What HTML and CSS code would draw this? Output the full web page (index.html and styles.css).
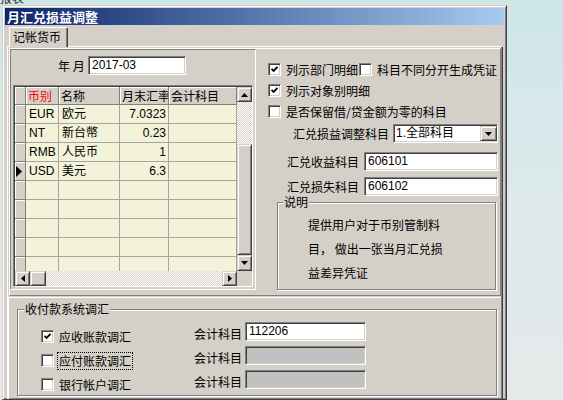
FILE: index.html
```html
<!DOCTYPE html>
<html lang="zh-CN">
<head>
<meta charset="utf-8">
<title>月汇兑损益调整</title>
<link rel="stylesheet" href="styles.css">
</head>
<body>
<div class="desk-strip"><span>报表</span></div>
<div class="window">
  <div class="titlebar">月汇兑损益调整</div>
  <div class="tabs"><div class="tab">记帐货币</div></div>
  <div class="panel">
    <div class="upper">
      <div class="left">
        <div class="yearrow">
          <span class="yearlabel">年 月</span>
          <div class="field year">2017-03</div>
        </div>
        <div class="grid">
          <div class="gridmain">
            <div class="table">
              <div class="h ind"></div><div class="h red">币别</div><div class="h">名称</div><div class="h">月末汇率</div><div class="h">会计科目</div>
              <div class="ind"></div><div class="c">EUR</div><div class="c">欧元</div><div class="c num">7.0323</div><div class="c"></div>
              <div class="ind"></div><div class="c">NT</div><div class="c">新台幣</div><div class="c num">0.23</div><div class="c"></div>
              <div class="ind"></div><div class="c">RMB</div><div class="c">人民币</div><div class="c num">1</div><div class="c"></div>
              <div class="ind cur"><svg width="6" height="11" viewBox="0 0 6 11"><polygon points="0,0 6,5.5 0,11" fill="#000"/></svg></div><div class="c">USD</div><div class="c">美元</div><div class="c num">6.3</div><div class="c"></div>
              <div class="ind"></div><div class="c"></div><div class="c"></div><div class="c"></div><div class="c"></div>
              <div class="ind"></div><div class="c"></div><div class="c"></div><div class="c"></div><div class="c"></div>
              <div class="ind"></div><div class="c"></div><div class="c"></div><div class="c"></div><div class="c"></div>
              <div class="ind"></div><div class="c"></div><div class="c"></div><div class="c"></div><div class="c"></div>
              <div class="ind"></div><div class="c"></div><div class="c"></div><div class="c"></div><div class="c"></div>
            </div>
            <div class="hs">
              <div class="sbtn hbtn"><svg width="4" height="7" viewBox="0 0 4 7"><polygon points="4,0 0,3.5 4,7" fill="#000"/></svg></div>
              <div class="sthumb hthumb"></div>
              <div class="trough"></div>
              <div class="sbtn hbtn"><svg width="4" height="7" viewBox="0 0 4 7"><polygon points="0,0 4,3.5 0,7" fill="#000"/></svg></div>
            </div>
          </div>
          <div class="vs">
            <div class="sbtn vbtn"><svg width="7" height="4" viewBox="0 0 7 4"><polygon points="0,4 7,4 3.5,0" fill="#000"/></svg></div>
            <div class="trough vtrough"></div>
            <div class="sthumb vthumb"></div>
            <div class="sbtn vbtn vdown"><svg width="7" height="4" viewBox="0 0 7 4"><polygon points="0,0 7,0 3.5,4" fill="#000"/></svg></div>
            <div class="corner"></div>
          </div>
        </div>
      </div>
      <div class="right">
        <div class="cbrow">
          <span class="cb"><svg width="7" height="7" viewBox="0 0 7 7"><path d="M0.5 2.8 L2.6 4.9 L6.5 1" stroke="#000" stroke-width="1.8" fill="none"/></svg></span>
          <span class="cbtext">列示部门明细</span>
          <span class="cb cb2"></span>
          <span class="cbtext">科目不同分开生成凭证</span>
        </div>
        <div class="cbrow">
          <span class="cb"><svg width="7" height="7" viewBox="0 0 7 7"><path d="M0.5 2.8 L2.6 4.9 L6.5 1" stroke="#000" stroke-width="1.8" fill="none"/></svg></span>
          <span class="cbtext">列示对象别明细</span>
        </div>
        <div class="cbrow">
          <span class="cb"></span>
          <span class="cbtext">是否保留借/贷金额为零的科目</span>
        </div>
        <div class="frow frow1">
          <span class="flabel">汇兑损益调整科目</span>
          <div class="field combo"><span>1.全部科目</span><span class="cbtn"><svg width="7" height="4" viewBox="0 0 7 4"><polygon points="0,0 7,0 3.5,4" fill="#000"/></svg></span></div>
        </div>
        <div class="frow frow2">
          <span class="flabel">汇兑收益科目</span>
          <div class="field acct">606101</div>
        </div>
        <div class="frow frow3">
          <span class="flabel">汇兑损失科目</span>
          <div class="field acct">606102</div>
        </div>
        <fieldset class="note">
          <legend>说明</legend>
          <p>提供用户对于币别管制料<br>目， 做出一张当月汇兑损<br>益差异凭证</p>
        </fieldset>
      </div>
    </div>
    <div class="lower">
      <fieldset class="group">
        <legend>收付款系统调汇</legend>
        <div class="grows">
          <div class="grow">
            <div class="gcb">
              <span class="cb"><svg width="7" height="7" viewBox="0 0 7 7"><path d="M0.5 2.8 L2.6 4.9 L6.5 1" stroke="#000" stroke-width="1.8" fill="none"/></svg></span>
              <span class="cbtext">应收账款调汇</span>
            </div>
            <span class="glabel">会计科目</span>
            <div class="field gfield">112206</div>
          </div>
          <div class="grow">
            <div class="gcb">
              <span class="cb"></span>
              <span class="cbtext focus">应付账款调汇</span>
            </div>
            <span class="glabel">会计科目</span>
            <div class="field gfield dis"></div>
          </div>
          <div class="grow">
            <div class="gcb">
              <span class="cb"></span>
              <span class="cbtext">银行帐户调汇</span>
            </div>
            <span class="glabel">会计科目</span>
            <div class="field gfield dis"></div>
          </div>
        </div>
      </fieldset>
    </div>
  </div>
</div>
</body>
</html>
```
FILE: styles.css
```css
* { box-sizing: border-box; }
html, body { margin: 0; padding: 0; }
body {
  width: 563px;
  height: 400px;
  overflow: hidden;
  background: linear-gradient(180deg, #cde6e8 0%, #dce9eb 45%, #e6e9ea 100%);
  font-family: "Noto Sans CJK SC", "Liberation Sans", sans-serif;
  font-size: 12px;
  color: #000;
}
.desk-strip { height: 5px; overflow: hidden; font-size: 12px; line-height: 12px; }
.desk-strip span { display: block; margin-top: -8px; color: #333; }

.window {
  margin-left: 2px;
  width: 505px;
  height: 395px;
  background: #d4d0c8;
  border: 1px solid;
  border-color: #d4d0c8 #404040 #404040 #d4d0c8;
  box-shadow: inset 1px 1px 0 #fff, inset -1px -1px 0 #808080;
  padding: 2px;
  overflow: hidden;
}
.titlebar {
  height: 17px;
  background: linear-gradient(90deg, #0a246a 0%, #a6caf0 100%);
  color: #fff;
  font-weight: bold;
  font-size: 13px;
  line-height: 17px;
  padding-left: 2px;
  white-space: nowrap;
}
.tabs {
  display: flex;
  margin-top: 2px;
  padding-left: 4px;
  height: 19px;
  position: relative;
  z-index: 1;
}
.tab {
  width: 59px;
  height: 20px;
  background: #d4d0c8;
  border-top: 1px solid #fff;
  border-left: 1px solid #fff;
  border-right: 1px solid #404040;
  box-shadow: inset -1px 0 0 #808080;
  border-radius: 2px 2px 0 0;
  padding-left: 3px;
  line-height: 17px;
  white-space: nowrap;
}
.panel {
  margin-left: 2px;
  width: 496px;
  height: 360px;
  border-top: 1px solid #fff;
  border-left: 1px solid #fff;
  border-right: 1px solid #404040;
  box-shadow: inset -1px 0 0 #808080;
}
.upper {
  margin: 1px 0 0 1px;
  width: 492px;
  height: 248px;
  border: 1px solid;
  border-color: #fff #808080 #808080 #fff;
  display: flex;
}
.left {
  width: 246px;
  height: 241px;
  flex: none;
  border-left: 1px solid #808080;
  border-top: 1px solid #808080;
  border-right: 1px solid #fff;
  border-bottom: 1px solid #fff;
}
.yearrow {
  display: flex;
  align-items: center;
  height: 19px;
  margin: 6px 0 0 47px;
}
.yearlabel { width: 30px; white-space: pre; }

.field {
  height: 19px;
  background: #fff;
  border: 1px solid;
  border-color: #808080 #fff #fff #808080;
  box-shadow: inset 1px 1px 0 #404040, inset -1px -1px 0 #d4d0c8;
  padding-left: 3px;
  font-family: "Liberation Sans", "Noto Sans CJK SC", sans-serif;
  font-size: 12px;
  line-height: 17px;
  white-space: nowrap;
  flex: none;
}
.field.year { width: 98px; }
.field.dis { background: #c0c0c0; }

.grid {
  margin: 11px 0 0 3px;
  width: 239px;
  height: 201px;
  border: 1px solid;
  border-color: #404040 #fff #fff #404040;
  box-shadow: -1px -1px 0 #808080;
  display: flex;
}
.gridmain { width: 222px; display: flex; flex-direction: column; }
.table {
  height: 184px;
  overflow: hidden;
  display: grid;
  grid-template-columns: 11px 33px 61px 49px 68px;
  grid-template-rows: 18px;
  grid-auto-rows: 19px;
  background: #f3f3da;
}
.h {
  background: #d4d0c8;
  border-right: 1px solid #808080;
  border-bottom: 1px solid #808080;
  box-shadow: inset 1px 1px 0 #fff;
  padding-left: 2px;
  line-height: 17px;
  white-space: nowrap;
  overflow: hidden;
}
.h.red { color: #ff0000; }
.ind {
  background: #d4d0c8;
  border-right: 1px solid #808080;
  border-bottom: 1px solid #808080;
  box-shadow: inset 1px 1px 0 #fff;
  padding: 0;
}
.ind.cur { display: flex; align-items: center; padding-left: 1px; }
.c {
  background: #f3f3da;
  border-right: 1px solid #a4a4a0;
  border-bottom: 1px solid #a4a4a0;
  padding: 0 2px 0 3px;
  line-height: 18px;
  white-space: nowrap;
  overflow: hidden;
  font-family: "Liberation Sans", "Noto Sans CJK SC", sans-serif;
}
.c.num { text-align: right; }

.sbtn {
  background: #d4d0c8;
  border: 1px solid;
  border-color: #d4d0c8 #404040 #404040 #d4d0c8;
  box-shadow: inset 1px 1px 0 #fff, inset -1px -1px 0 #808080;
  display: flex;
  align-items: center;
  justify-content: center;
  flex: none;
}
.sthumb {
  background: #d4d0c8;
  border: 1px solid;
  border-color: #d4d0c8 #404040 #404040 #d4d0c8;
  box-shadow: inset 1px 1px 0 #fff, inset -1px -1px 0 #808080;
  flex: none;
}
.trough {
  background: repeating-conic-gradient(#ffffff 0 25%, #d4d0c8 0 50%) 0 0 / 2px 2px;
  flex: 1;
}
.hs { height: 15px; display: flex; }
.hbtn { width: 15px; height: 15px; }
.hthumb { width: 16px; height: 15px; }
.vs { width: 15px; display: flex; flex-direction: column; }
.vbtn { width: 15px; height: 15px; }
.vdown { height: 16px; }
.vtrough { flex: none; height: 42px; }
.vthumb { height: 111px; }
.corner { height: 15px; background: #d4d0c8; }

.right {
  flex: 1;
  display: flex;
  flex-direction: column;
  padding: 10px 2px 0 12px;
}
.cbrow { display: flex; align-items: center; height: 21px; }
.cb {
  width: 13px;
  height: 13px;
  flex: none;
  background: #fff;
  border: 1px solid;
  border-color: #808080 #fff #fff #808080;
  box-shadow: inset 1px 1px 0 #404040, inset -1px -1px 0 #d4d0c8;
  display: flex;
  align-items: center;
  justify-content: center;
}
.cb2 { margin-left: 1px; }
.cbtext { margin-left: 5px; line-height: 14px; white-space: nowrap; }

.frow { display: flex; justify-content: flex-end; align-items: center; height: 19px; }
.frow1 { margin-top: 2px; gap: 4px; }
.frow2 { margin-top: 9px; gap: 5px; }
.frow3 { margin-top: 6px; gap: 5px; }
.flabel { white-space: nowrap; }
.field.acct { width: 134px; }
.field.combo {
  width: 105px;
  display: flex;
  align-items: center;
  padding: 0 0 0 2px;
  font-family: "Liberation Sans", "Noto Sans CJK SC", sans-serif;
}
.cbtn {
  margin-left: auto;
  width: 17px;
  height: 15px;
  background: #d4d0c8;
  border: 1px solid;
  border-color: #d4d0c8 #404040 #404040 #d4d0c8;
  box-shadow: inset 1px 1px 0 #fff, inset -1px -1px 0 #808080;
  display: flex;
  align-items: center;
  justify-content: center;
}

fieldset {
  margin: 0;
  padding: 0;
  min-width: 0;
  border: 1px solid #808080;
  box-shadow: inset 1px 1px 0 #fff, 1px 1px 0 #fff;
}
legend {
  padding: 0 1px;
  font-size: 12px;
  line-height: 12px;
  background: #d4d0c8;
  white-space: nowrap;
}
.note {
  margin: 0 2px 0 9px;
  height: 94px;
}
.note legend { margin-left: 5px; }
.note p { margin: 5px 0 0 30px; line-height: 24px; white-space: nowrap; }

.lower {
  margin-top: 1px;
  width: 493px;
  height: 108px;
  border-top: 1px solid #fff;
  border-left: 1px solid #fff;
}
.group {
  margin: 5px 0 0 8px;
  width: 480px;
  height: 93px;
}
.group legend { margin-left: 6px; }
.grows { margin-top: 5px; }
.grow { display: flex; align-items: flex-start; height: 24px; }
.gcb {
  margin: 10px 0 0 23px;
  width: 153px;
  height: 13px;
  display: flex;
  align-items: center;
  flex: none;
}
.focus { outline: 1px dotted #000; outline-offset: 1px; }
.glabel { width: 51px; margin-top: 6px; line-height: 16px; white-space: nowrap; flex: none; }
.field.gfield { width: 121px; margin-top: 2px; }
```
